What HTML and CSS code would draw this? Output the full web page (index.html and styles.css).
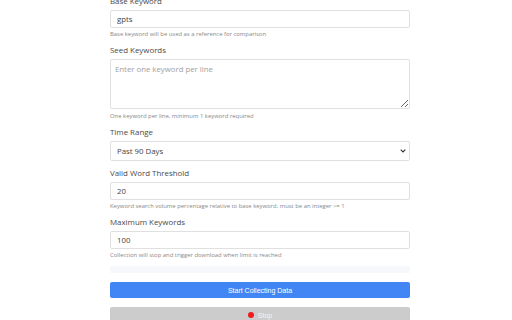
FILE: index.html
```html
<!DOCTYPE html>
<html>
<head>
<meta charset="utf-8">
<link rel="stylesheet" href="styles.css">
</head>
<body>
<div class="container">
  <div class="group">
    <label class="label">Base Keyword</label>
    <input class="field" type="text" value="gpts">
    <div class="help">Base keyword will be used as a reference for comparison</div>
  </div>
  <div class="group">
    <label class="label">Seed Keywords</label>
    <textarea class="field area" placeholder="Enter one keyword per line"></textarea>
    <div class="help">One keyword per line, minimum 1 keyword required</div>
  </div>
  <div class="group">
    <label class="label">Time Range</label>
    <div class="select-wrap">
      <select class="field select">
        <option>Past 90 Days</option>
      </select>
      <svg class="chevron" width="6" height="4" viewBox="0 0 6 4"><path d="M0.7 0.7 L3 3 L5.3 0.7" fill="none" stroke="#333" stroke-width="1.1"/></svg>
    </div>
  </div>
  <div class="group">
    <label class="label">Valid Word Threshold</label>
    <input class="field" type="text" value="20">
    <div class="help">Keyword search volume percentage relative to base keyword, must be an integer &gt;= 1</div>
  </div>
  <div class="group">
    <label class="label">Maximum Keywords</label>
    <input class="field" type="text" value="100">
    <div class="help">Collection will stop and trigger download when limit is reached</div>
  </div>
  <div class="status"></div>
  <button class="btn btn-start">Start Collecting Data</button>
  <button class="btn btn-stop"><span class="dot"></span>Stop</button>
</div>
</body>
</html>
```
FILE: styles.css
```css
html, body {
  margin: 0;
  padding: 0;
  background: #ffffff;
  overflow: hidden;
}
body {
  font-family: "Open Sans", "Noto Sans", sans-serif;
  color: #444;
}
.container {
  width: 300px;
  margin: -4px 0 0 110px;
  display: flex;
  flex-direction: column;
}
.group {
  display: flex;
  flex-direction: column;
  margin-bottom: 7px;
}
.label {
  font-size: 7.9px;
  line-height: 10px;
  height: 10px;
  margin-bottom: 4px;
  color: #4a4a4a;
}
.field {
  box-sizing: border-box;
  width: 300px;
  height: 18px;
  border: 1px solid #e0e0e0;
  border-radius: 2px;
  padding: 0 6px;
  margin: 0;
  font-family: "Open Sans", "Noto Sans", sans-serif;
  font-size: 7.8px;
  color: #444;
  background: #fff;
  outline: none;
}
.area {
  display: block;
  height: 50px;
  padding: 4px 4px;
  resize: vertical;
  margin-bottom: 1px;
  line-height: 10px;
}
.area::placeholder {
  color: #a0a0a0;
}
.select-wrap {
  position: relative;
}
.select {
  appearance: none;
  -webkit-appearance: none;
  height: 20px;
  display: block;
}
.chevron {
  position: absolute;
  right: 4px;
  top: 8px;
}
.help {
  font-size: 5.9px;
  line-height: 8px;
  height: 8px;
  margin-top: 2px;
  color: #888;
}
.status {
  height: 7px;
  background: #f6f8fb;
  margin-bottom: 9px;
}
.btn {
  box-sizing: border-box;
  width: 300px;
  height: 16px;
  border: none;
  border-radius: 2px;
  font-family: "Liberation Sans", Arial, sans-serif;
  font-size: 7px;
  color: #fff;
  padding: 0;
  margin: 0 0 9px;
  display: flex;
  align-items: center;
  justify-content: center;
}
.btn-start {
  background: #4285f4;
}
.btn-stop {
  background: #cccccc;
  color: #f4f4f4;
}
.dot {
  width: 6px;
  height: 6px;
  border-radius: 50%;
  background: #ee1c1c;
  margin-right: 4px;
}
```
